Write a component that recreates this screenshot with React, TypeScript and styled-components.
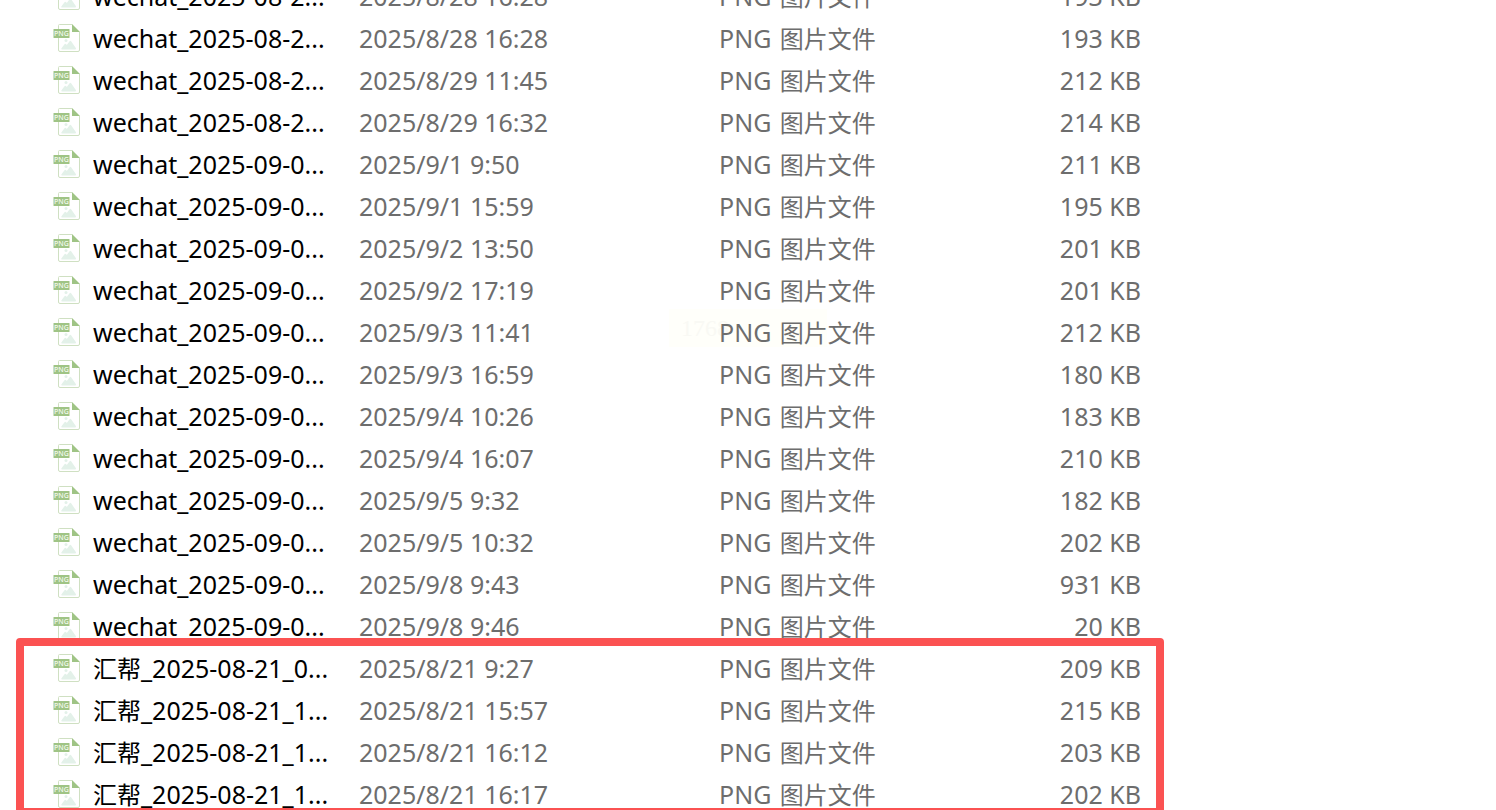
import React from "react";
import styled, { createGlobalStyle } from "styled-components";

const GlobalStyle = createGlobalStyle`
  * { box-sizing: border-box; }
  body {
    margin: 0;
    background: #ffffff;
    font-family: "Noto Sans", "Noto Sans CJK SC", sans-serif;
  }
`;

const Viewport = styled.main`
  height: 100vh;
  overflow: hidden;
  background: #ffffff;
`;

/* The list is scrolled so that its first row is partly out of view. */
const ScrolledList = styled.div`
  position: relative;
  margin-top: -24px;
`;

const FileTable = styled.table`
  position: relative;
  width: 1141px;
  table-layout: fixed;
  border-collapse: collapse;
  font-size: 25px;
  line-height: 40px;
`;

const Column = styled.col<{ $width: number }>`
  width: ${(p) => p.$width}px;
`;

const FileRow = styled.tr`
  height: 42px;
`;

const Cell = styled.td<{ $align?: "left" | "right" }>`
  height: 42px;
  padding: 0 0 2px;
  color: #6d6d6d;
  text-align: ${(p) => p.$align ?? "left"};
  vertical-align: top;
  white-space: nowrap;
`;

const NameCell = styled(Cell)`
  padding: 0 0 0 53px;
  color: #000000;
`;

const NameContent = styled.div`
  display: flex;
  align-items: flex-start;
  gap: 12px;
  height: 42px;
`;

const Han = styled.span<{ $spaced?: boolean }>`
  padding-left: ${(p) => (p.$spaced ? 2 : 0)}px;
  font-size: 24px;
  line-height: 24px;
`;

const FileIcon = styled.svg`
  flex: none;
  align-self: center;
  width: 28px;
  height: 30px;
`;

const Stamp = styled.div`
  position: absolute;
  top: 333px;
  left: 669px;
  width: 158px;
  height: 38px;
  padding-left: 12px;
  background: #fffffa;
  color: #f9f9f4;
  font-family: "Liberation Serif", serif;
  font-size: 24px;
  line-height: 38px;
`;

const Highlight = styled.div`
  position: absolute;
  left: 16px;
  bottom: 0;
  width: 1148px;
  height: 178px;
  border: 8px solid #fb5252;
  border-radius: 4px;
  pointer-events: none;
`;

interface FileEntry {
  han?: string;
  name: string;
  date: string;
  size: string;
}

const files: FileEntry[] = [
  { name: "wechat_2025-08-2...", date: "2025/8/28 16:28", size: "193 KB" },
  { name: "wechat_2025-08-2...", date: "2025/8/28 16:28", size: "193 KB" },
  { name: "wechat_2025-08-2...", date: "2025/8/29 11:45", size: "212 KB" },
  { name: "wechat_2025-08-2...", date: "2025/8/29 16:32", size: "214 KB" },
  { name: "wechat_2025-09-0...", date: "2025/9/1 9:50", size: "211 KB" },
  { name: "wechat_2025-09-0...", date: "2025/9/1 15:59", size: "195 KB" },
  { name: "wechat_2025-09-0...", date: "2025/9/2 13:50", size: "201 KB" },
  { name: "wechat_2025-09-0...", date: "2025/9/2 17:19", size: "201 KB" },
  { name: "wechat_2025-09-0...", date: "2025/9/3 11:41", size: "212 KB" },
  { name: "wechat_2025-09-0...", date: "2025/9/3 16:59", size: "180 KB" },
  { name: "wechat_2025-09-0...", date: "2025/9/4 10:26", size: "183 KB" },
  { name: "wechat_2025-09-0...", date: "2025/9/4 16:07", size: "210 KB" },
  { name: "wechat_2025-09-0...", date: "2025/9/5 9:32", size: "182 KB" },
  { name: "wechat_2025-09-0...", date: "2025/9/5 10:32", size: "202 KB" },
  { name: "wechat_2025-09-0...", date: "2025/9/8 9:43", size: "931 KB" },
  { name: "wechat_2025-09-0...", date: "2025/9/8 9:46", size: "20 KB" },
  { han: "汇帮", name: "_2025-08-21_0...", date: "2025/8/21 9:27", size: "209 KB" },
  { han: "汇帮", name: "_2025-08-21_1...", date: "2025/8/21 15:57", size: "215 KB" },
  { han: "汇帮", name: "_2025-08-21_1...", date: "2025/8/21 16:12", size: "203 KB" },
  { han: "汇帮", name: "_2025-08-21_1...", date: "2025/8/21 16:17", size: "202 KB" },
];

function PngIcon() {
  return (
    <FileIcon viewBox="0 0 28 30" aria-hidden="true">
      <path
        d="M19 .5H6.5a1 1 0 0 0-1 1V26A1.5 1.5 0 0 0 7 27.5H25a1.5 1.5 0 0 0 1.5-1.5V8"
        fill="#ffffff"
        stroke="#cfe0c2"
      />
      <path d="M19 0V8h8Z" fill="#9fc485" />
      <circle cx="13" cy="16.5" r="1.5" fill="#e3f1e9" />
      <path
        d="M9 25.5c-.8 0-.9-.6-.5-1.2l3-4c.6-.7 1.1-.7 1.7 0l.6.7 2.6-3.6c.6-.8 1.3-.8 1.9 0l4.5 6.7c.4.8.2 1.4-.6 1.4Z"
        fill="#e3f1e9"
      />
      <rect x="0.5" y="5" width="16" height="9" rx="0.5" fill="#9fc485" />
      <text
        x="8.5"
        y="12"
        textAnchor="middle"
        fill="#f4faef"
        fontFamily="Noto Sans, sans-serif"
        fontSize="7"
        fontWeight="500"
      >
        PNG
      </text>
    </FileIcon>
  );
}

export default function App() {
  return (
    <>
      <GlobalStyle />
      <Viewport>
        <ScrolledList>
          <Stamp aria-hidden="true">1768</Stamp>
          <FileTable aria-label="文件">
            <colgroup>
              <Column $width={359} />
              <Column $width={360} />
              <Column $width={240} />
              <Column $width={182} />
            </colgroup>
            <tbody>
              {files.map((file, i) => (
                <FileRow key={i}>
                  <NameCell>
                    <NameContent>
                      <PngIcon />
                      <span>
                        {file.han && <Han>{file.han}</Han>}
                        {file.name}
                      </span>
                    </NameContent>
                  </NameCell>
                  <Cell>{file.date}</Cell>
                  <Cell>
                    PNG <Han $spaced>图片文件</Han>
                  </Cell>
                  <Cell $align="right">{file.size}</Cell>
                </FileRow>
              ))}
            </tbody>
          </FileTable>
          <Highlight />
        </ScrolledList>
      </Viewport>
    </>
  );
}
